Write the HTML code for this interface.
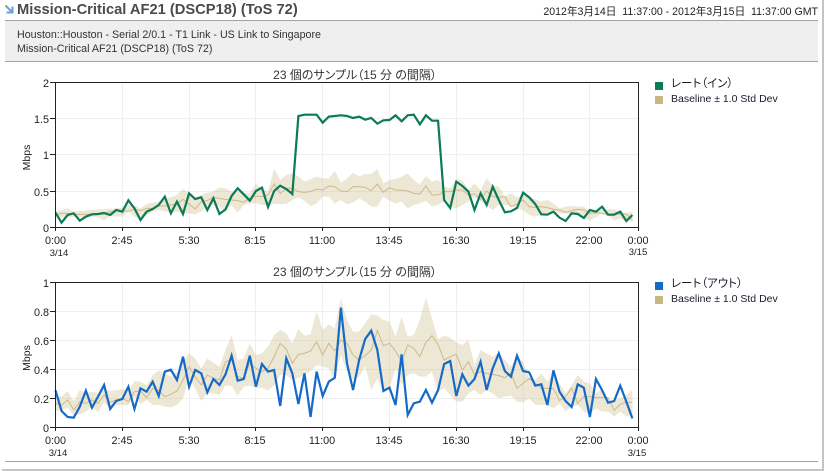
<!DOCTYPE html>
<html><head><meta charset="utf-8">
<style>
html,body{margin:0;padding:0;background:#fff;width:824px;height:471px;overflow:hidden}
body{position:relative;font-family:"Liberation Sans","Noto Sans CJK JP",sans-serif}
.a{position:absolute;white-space:nowrap}
svg{position:absolute;left:0;top:0}
svg text{font-family:"Liberation Sans","Noto Sans CJK JP",sans-serif;font-size:10.8px;fill:#222}
svg text.ttl{font-size:12px;font-feature-settings:"palt";fill:#333}
svg text.lg{font-size:10.5px;fill:#1a1a2a}
svg text.lj{font-size:11.5px;font-feature-settings:"palt";fill:#1a1a2a}
.g{stroke:#efefef;stroke-width:1;fill:none}
.ax{stroke:#222;stroke-width:1;fill:none}
.band{fill:#c9b682;fill-opacity:.33;stroke:none}
.mean{fill:none;stroke:#cdb98a;stroke-width:1;vector-effect:non-scaling-stroke}
.ln{fill:none;stroke-width:2.2;stroke-linejoin:miter;vector-effect:non-scaling-stroke}
</style></head><body>
<div class="a" style="left:17px;top:0;font-size:14.7px;line-height:20px;font-weight:bold;color:#4b4b4b">Mission-Critical AF21 (DSCP18) (ToS 72)</div>
<div class="a" style="right:6px;top:5px;font-size:10.6px;line-height:14px;color:#222;font-feature-settings:'palt'">2012年3月14日&nbsp; 11:37:00 - 2012年3月15日&nbsp; 11:37:00 GMT</div>
<div class="a" style="left:5px;top:20px;width:813px;height:40px;background:#efefef;border-top:1px solid #a3a3a3;border-bottom:1px solid #a3a3a3"></div>
<div class="a" style="left:17px;top:28px;font-size:10.7px;line-height:14px;color:#333">Houston::Houston - Serial 2/0.1 - T1 Link - US Link to Singapore<br>Mission-Critical AF21 (DSCP18) (ToS 72)</div>
<div class="a" style="left:5px;top:461px;width:813px;height:1px;background:#a3a3a3"></div>
<div class="a" style="left:2px;top:469px;width:822px;height:2px;background:#c4c4c4"></div>
<div class="a" style="left:822px;top:0;width:2px;height:471px;background:#c4c4c4"></div>
<svg width="824" height="471" viewBox="0 0 824 471">
<path d="M5.5 5.500L12 12M12.500 6.500V12.500H6.500" fill="none" stroke="#6aa0d8" stroke-width="2"/>

<!-- chart 1 -->
<text class="ttl" x="355" y="79" text-anchor="middle">23 個のサンプル（15 分 の間隔）</text>
<path class="g" d="M122.5 83V227M189.5 83V227M255.5 83V227M322.5 83V227M389.5 83V227M456.5 83V227M523.5 83V227M589.5 83V227M56 118.500H638M56 154.500H638M56 191.500H638"/>
<g transform="matrix(6.0725,0,0,0.33333,55.5,80)">
<polygon class="band" points="0,393 1,392 2,385 3,395 4,393 5,392 6,390 7,388 8,387 9,386 10,385 11,383 12,372 13,378 14,385 15,372 16,368 17,365 18,355 19,352 20,345 21,327 22,340 23,352 24,345 25,338 26,335 27,322 28,325 29,335 30,335 31,338 32,340 33,312 34,325 35,335 36,265 37,300 38,285 39,280 40,290 41,305 42,298 43,290 44,295 45,295 46,272 47,308 48,296 49,278 50,290 51,282 52,282 53,267 54,310 55,300 56,297 57,290 58,280 59,300 60,313 61,288 62,305 63,300 64,320 65,325 66,298 67,300 68,330 69,310 70,330 71,295 72,318 73,320 74,350 75,340 76,352 77,345 78,350 79,358 80,365 81,360 82,370 83,385 84,380 85,378 86,380 87,380 88,392 89,393 90,388 91,388 92,388 93,395 94,400 95,395 95,425 94,423 93,415 92,422 91,405 90,400 89,412 88,420 87,415 86,405 85,405 84,400 83,400 82,395 81,405 80,405 79,410 78,405 77,390 76,385 75,378 74,375 73,375 72,390 71,375 70,365 69,350 68,365 67,375 66,385 65,380 64,365 63,375 62,380 61,362 60,370 59,375 58,385 57,365 56,370 55,362 54,350 53,380 52,380 51,365 50,355 49,367 48,373 47,360 46,370 45,350 44,350 43,370 42,378 41,362 40,352 39,360 38,372 37,372 36,372 35,375 34,375 33,370 32,370 31,375 30,398 29,375 28,398 27,380 26,375 25,375 24,395 23,403 22,400 21,400 20,395 19,395 18,395 17,390 16,395 15,405 14,415 13,410 12,395 11,410 10,410 9,408 8,422 7,412 6,410 5,410 4,412 3,410 2,412 1,412 0,410"/>
<polyline class="mean" points="0,405 1,400 2,400 3,403 4,403 5,403 6,402 7,402 8,400 9,395 10,393 11,393 12,393 13,388 14,392 15,385 16,385 17,378 18,378 19,375 20,372 21,358 22,372 23,387 24,365 25,362 26,352 27,355 28,358 29,360 30,362 31,367 32,355 33,348 34,350 35,345 36,312 37,340 38,325 39,325 40,335 41,337 42,335 43,327 44,330 45,318 46,320 47,333 48,335 49,320 50,320 51,322 52,332 53,312 54,337 55,323 56,330 57,330 58,333 59,340 60,342 61,318 62,345 63,345 64,335 65,335 66,330 67,330 68,345 69,342 70,358 71,333 72,350 73,352 74,350 75,380 76,372 77,360 78,380 79,382 80,380 81,383 82,388 83,390 84,397 85,392 86,388 87,390 88,400 89,398 90,400 91,405 92,402 93,402 94,402 95,420"/>
<polyline class="ln" stroke="#0b7b57" points="0,398 1,428 2,405 3,400 4,422 5,410 6,403 7,402 8,399 9,405 10,390 11,395 12,361 13,385 14,420 15,395 16,387 17,375 18,350 19,400 20,365 21,402 22,340 23,357 24,352 25,390 26,355 27,402 28,388 29,348 30,325 31,343 32,362 33,333 34,323 35,381 36,333 37,317 38,327 39,342 40,108 41,104 42,104 43,104 44,128 45,110 46,108 47,106 48,108 49,114 50,110 51,119 52,114 53,131 54,121 55,120 56,106 57,124 58,106 59,104 60,133 61,106 62,122 63,122 64,360 65,384 66,305 67,318 68,335 69,390 70,340 71,375 72,320 73,360 74,397 75,394 76,384 77,338 78,352 79,372 80,403 81,404 82,395 83,413 84,423 85,400 86,402 87,414 88,390 89,395 90,380 91,404 92,404 93,395 94,423 95,405"/>
</g>
<path class="ax" d="M55.500 82.500H638.500V227M50 82.500H55.500V231M50 118.500H55.500M50 154.500H55.500M50 191.500H55.500M50 227.500H638.500M122.500 227V231M189.500 227V231M255.500 227V231M322.500 227V231M389.500 227V231M456.500 227V231M523.500 227V231M589.500 227V231M638.500 227V231"/>
<g text-anchor="end"><text x="49" y="87">2</text><text x="49" y="123">1.5</text><text x="49" y="159">1</text><text x="49" y="196">0.5</text><text x="49" y="232">0</text></g>
<text transform="translate(30,157.500) rotate(-90)" text-anchor="middle" style="font-size:10.500px">Mbps</text>
<g text-anchor="middle"><text x="55.500" y="244">0:00</text><text x="122" y="244">2:45</text><text x="189" y="244">5:30</text><text x="255" y="244">8:15</text><text x="322" y="244">11:00</text><text x="389" y="244">13:45</text><text x="456" y="244">16:30</text><text x="523" y="244">19:15</text><text x="589" y="244">22:00</text><text x="638" y="244">0:00</text></g>
<text x="59" y="256" text-anchor="middle" style="font-size:9.500px">3/14</text>
<text x="638" y="255" text-anchor="middle" style="font-size:9.500px">3/15</text>
<rect x="655" y="82" width="8" height="8" fill="#0b7b57"/><rect x="655" y="96" width="8" height="8" fill="#c9b682"/>
<text class="lj" x="671" y="87">レート（イン）</text>
<text class="lg" x="671" y="102">Baseline ± 1.0 Std Dev</text>

<!-- chart 2 -->
<text class="ttl" x="355" y="276" text-anchor="middle">23 個のサンプル（15 分 の間隔）</text>
<path class="g" d="M122.500 283V427M189.500 283V427M255.500 283V427M322.500 283V427M389.500 283V427M456.500 283V427M523.500 283V427M589.500 283V427M56 311.500H638M56 340.500H638M56 369.500H638M56 398.500H638"/>
<g transform="matrix(6.0725,0,0,0.33333,55.5,265)">
<polygon class="band" points="0,395 1,395 2,378 3,410 4,375 5,385 6,380 7,385 8,372 9,378 10,375 11,373 12,378 13,348 14,350 15,362 16,330 17,317 18,325 19,335 20,322 21,290 22,265 23,280 24,310 25,280 26,293 27,305 28,255 29,210 30,285 31,280 32,235 33,270 34,265 35,245 36,210 37,195 38,205 39,235 40,192 41,212 42,208 43,140 44,195 45,178 46,190 47,100 48,165 49,200 50,200 51,175 52,148 53,152 54,165 55,170 56,215 57,155 58,215 59,210 60,165 61,97 62,160 63,222 64,212 65,218 66,232 67,240 68,225 69,300 70,255 71,265 72,275 73,265 74,285 75,305 76,275 77,290 78,340 79,345 80,325 81,350 82,325 83,355 84,385 85,360 86,330 87,350 88,355 89,385 90,370 91,410 92,405 93,400 94,390 95,375 95,450 94,455 93,440 92,455 91,440 90,440 89,430 88,445 87,440 86,420 85,425 84,440 83,415 82,430 81,420 80,420 79,420 78,400 77,412 76,410 75,392 74,395 73,400 72,385 71,375 70,390 69,375 68,385 67,410 66,410 65,390 64,370 63,380 62,320 61,335 60,335 59,325 58,330 57,360 56,310 55,370 54,375 53,340 52,375 51,305 50,335 49,345 48,320 47,270 46,350 45,310 44,305 43,300 42,318 41,330 40,340 39,345 38,330 37,330 36,360 35,377 34,368 33,368 32,362 31,365 30,392 29,363 28,362 27,390 26,385 25,385 24,408 23,370 22,340 21,400 20,420 19,427 18,425 17,420 16,420 15,405 14,418 13,395 12,420 11,420 10,420 9,430 8,412 7,442 6,425 5,440 4,448 3,452 2,428 1,437 0,437"/>
<polyline class="mean" points="0,415 1,420 2,405 3,435 4,410 5,415 6,405 7,415 8,390 9,412 10,405 11,400 12,410 13,380 14,378 15,398 16,370 17,377 18,395 19,388 20,378 21,345 22,305 23,335 24,360 25,330 26,340 27,345 28,290 29,285 30,335 31,340 32,295 33,310 34,320 35,310 36,275 37,235 38,252 39,295 40,268 41,265 42,258 43,230 44,270 45,235 46,258 47,225 48,235 49,270 50,285 51,272 52,255 53,197 54,242 55,235 56,258 57,290 58,240 59,250 60,275 61,232 62,212 63,238 64,285 65,275 66,268 67,315 68,290 69,330 70,320 71,325 72,328 73,332 74,338 75,325 76,370 77,355 78,340 79,355 80,370 81,370 82,370 83,407 84,395 85,370 86,415 87,395 88,395 89,398 90,398 91,398 92,436 93,418 94,412 95,412"/>
<polyline class="ln" stroke="#1569c7" points="0,376 1,438 2,456 3,458 4,425 5,377 6,428 7,395 8,360 9,432 10,408 11,402 12,365 13,432 14,370 15,380 16,350 17,393 18,320 19,314 20,345 21,275 22,365 23,315 24,325 25,382 26,342 27,360 28,328 29,272 30,347 31,342 32,272 33,365 34,297 35,320 36,315 37,423 38,280 39,325 40,417 41,325 42,456 43,320 44,393 45,350 46,338 47,128 48,295 49,375 50,285 51,222 52,197 53,255 54,378 55,368 56,420 57,268 58,450 59,415 60,410 61,375 62,413 63,375 64,297 65,288 66,393 67,328 68,362 69,342 70,290 71,375 72,310 73,265 74,318 75,335 76,272 77,318 78,322 79,362 80,358 81,420 82,316 83,380 84,408 85,426 86,358 87,368 88,456 89,342 90,375 91,413 92,408 93,362 94,410 95,460"/>
</g>
<path class="ax" d="M55.500 282.500H638.500V427M50 282.500H55.500V431M50 311.500H55.500M50 340.500H55.500M50 369.500H55.500M50 398.500H55.500M50 427.500H638.500M122.500 427V431M189.500 427V431M255.500 427V431M322.500 427V431M389.500 427V431M456.500 427V431M523.500 427V431M589.500 427V431M638.500 427V431"/>
<g text-anchor="end"><text x="49" y="87" style="display:none"></text><text x="49" y="287">1</text><text x="49" y="316">0.8</text><text x="49" y="345">0.6</text><text x="49" y="374">0.4</text><text x="49" y="403">0.2</text><text x="49" y="432">0</text></g>
<text transform="translate(30,358) rotate(-90)" text-anchor="middle" style="font-size:10.500px">Mbps</text>
<g text-anchor="middle"><text x="55.500" y="444">0:00</text><text x="122" y="444">2:45</text><text x="189" y="444">5:30</text><text x="255" y="444">8:15</text><text x="322" y="444">11:00</text><text x="389" y="444">13:45</text><text x="456" y="444">16:30</text><text x="523" y="444">19:15</text><text x="589" y="444">22:00</text><text x="638" y="444">0:00</text></g>
<text x="58" y="456" text-anchor="middle" style="font-size:9.500px">3/14</text>
<text x="637" y="456" text-anchor="middle" style="font-size:9.500px">3/15</text>
<rect x="655" y="282" width="8" height="8" fill="#1569c7"/><rect x="655" y="296" width="8" height="8" fill="#c9b682"/>
<text class="lj" x="671" y="287">レート（アウト）</text>
<text class="lg" x="671" y="302">Baseline ± 1.0 Std Dev</text>
</svg>
</body></html>
